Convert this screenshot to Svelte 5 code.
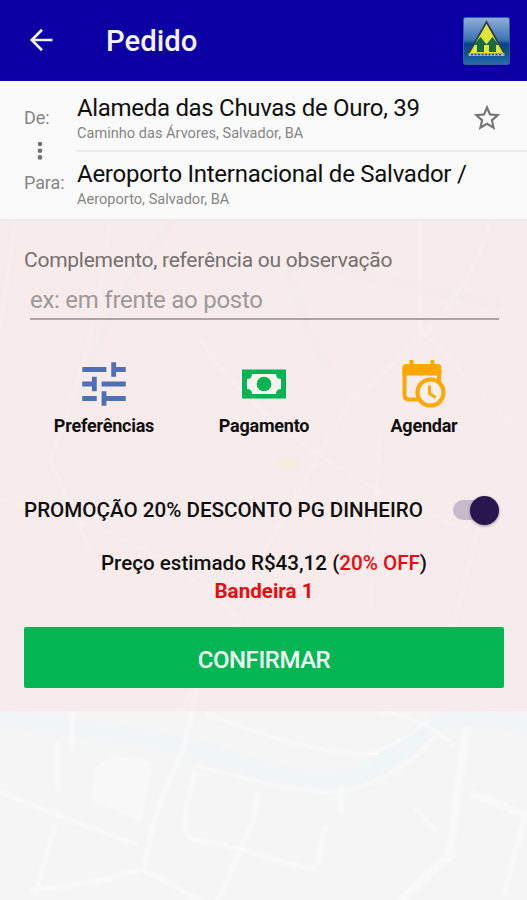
<script>
  let note = $state('');
  let discount = $state(true);
  const route = [
    { title: 'Alameda das Chuvas de Ouro, 39', area: 'Caminho das Árvores, Salvador, BA' },
    { title: 'Aeroporto Internacional de Salvador /', area: 'Aeroporto, Salvador, BA' }
  ];
</script>

<div class="screen">
  <svg class="map" viewBox="0 0 527 680" fill="none" aria-hidden="true">
    <rect width="527" height="680" fill="#f5f5f5" />
    <g stroke="#eff4f7" stroke-width="15" class="soft">
      <path d="M-5 498 Q50 503 100 512 Q180 522 230 540 Q310 569 360 555 Q405 535 424 510 Q450 488 532 506" />
      <path stroke-width="5" stroke="#edf2f4" d="M175 0 Q110 75 80 180M290 50Q300 100 330 150M300 40Q400 65 500 85" />
    </g>
    <path class="soft" fill="#f8f8f8" d="M95 548l20-13 38 7-12 60-50-22z" />
    <g stroke="#f9f9f9" stroke-width="5" class="soft">
      <path d="M196 470Q190 515 176 545Q150 600 144 650L210 685M0 572Q60 597 138 625M58 520v50M55 605L35 675M30 670Q90 665 140 650M72 490v40" />
      <path stroke-width="8" d="M467 507Q457 570 450 635L400 680M470 573L527 596" />
      <path d="M258 572Q255 600 243 625L215 685M195 552q-10 35-10 58 2 12 30 13l100 27M341 565v28M325 606l-8 40M524 600l-20 75M415 588l22 24" />
      <path stroke-width="3" d="M205 493Q300 532 365 534Q395 528 430 500M380 492Q430 498 455 528M195 545Q290 573 340 572Q400 560 435 516" />
      <path stroke-width="5" opacity=".8" d="M15 0L0 110M110 0Q95 130 50 240L90 330M490 0Q470 90 350 180L260 340M200 120Q280 240 470 310M420 0v110L527 220M0 280Q150 310 240 400L180 490M380 210l-10 180M480 300l-40 160" />
    </g>
    <ellipse class="soft" cx="289" cy="244" rx="12" ry="7" fill="#f5f2e4" />
    <path d="M368 534h10" stroke="#fff" stroke-width="1.500" />
  </svg>

  <header>
    <button class="back" aria-label="Voltar">
      <svg width="24" height="24" viewBox="0 0 24 24" fill="none" stroke="#f2f1ff" stroke-width="2.700">
        <path d="M23.500 12H2.500M13 1.800L2.800 12l10.200 10.200" />
      </svg>
    </button>
    <h1>Pedido</h1>
    <svg class="logo" width="47" height="48" viewBox="0 0 47 48">
      <defs>
        <linearGradient id="sky" x1="0" y1="0" x2="0" y2="1">
          <stop offset="0" stop-color="#8fb0d8" />
          <stop offset=".48" stop-color="#3c72b2" />
          <stop offset=".56" stop-color="#07418f" />
          <stop offset=".78" stop-color="#07559c" />
          <stop offset="1" stop-color="#2d6ba8" />
        </linearGradient>
      </defs>
      <rect x=".5" y=".5" width="46" height="47" rx="2" fill="url(#sky)" stroke="#315da5" />
      <path d="M23.500 5L42 37.500H5z" fill="#dfe63a" stroke="#343c47" stroke-width="1.800" />
      <path d="M17.500 20l6.500 8h-3v7h-7v-7h-3zM29.500 20l6.500 8h-3v7h-7v-7h-3z" fill="#17694a" />
      <path d="M5.500 37.500h36" stroke="#a6b1c9" stroke-width="3" />
      <path d="M8 37.500h31" stroke="#3c4968" stroke-width="1.500" stroke-dasharray="2 1.500" />
    </svg>
  </header>

  <section class="route">
    <div class="ends">
      <span>De:</span>
      <svg width="6" height="20" viewBox="0 0 6 20" fill="#707070">
        <circle cx="3" cy="3" r="2.300" /><circle cx="3" cy="9.700" r="2.300" /><circle cx="3" cy="16.400" r="2.300" />
      </svg>
      <span>Para:</span>
    </div>
    <div class="stops">
      {#each route as stop, i}
        <div class="stop">
          <div class="place">
            <strong>{stop.title}</strong>
            <small>{stop.area}</small>
          </div>
          {#if i === 0}
            <svg class="star" width="32" height="32" viewBox="0 0 24 24" fill="#757575">
              <path d="M22 9.240l-7.190-.62L12 2 9.190 8.630 2 9.240l5.460 4.730L5.820 21 12 17.270 18.180 21l-1.630-7.030L22 9.240zM12 15.400l-3.760 2.270 1-4.280-3.320-2.880 4.380-.38L12 6.100l1.710 4.040 4.380.38-3.320 2.880 1 4.280L12 15.400z" />
            </svg>
          {/if}
        </div>
      {/each}
    </div>
  </section>

  <main>
    <label for="note">Complemento, referência ou observação</label>
    <input id="note" bind:value={note} placeholder="ex: em frente ao posto" />

    <div class="actions">
      <button>
        <svg width="58" height="58" viewBox="0 0 24 24" fill="#4e70b6">
          <path d="M3 17v2h6v-2H3zM3 5v2h10V5H3zm10 16v-2h8v-2h-8v-2h-2v6h2zM7 9v2H3v2h4v2h2V9H7zm14 4v-2H11v2h10zm-6-4h2V7h4V5h-4V3h-2v6z" />
        </svg>
        <span>Preferências</span>
      </button>
      <button>
        <svg width="58" height="58" viewBox="0 0 58 58">
          <path d="M7 14.500h44v29H7z" fill="#03b455" />
          <path d="M17 19h24q0 5 5 5v10q-5 0-5 5H17q0-5-5-5V24q5 0 5-5z" fill="#f6f4ed" />
          <circle cx="29" cy="29" r="7.300" fill="#03b455" />
        </svg>
        <span>Pagamento</span>
      </button>
      <button>
        <svg width="58" height="58" viewBox="0 0 58 58" fill="none" stroke="#fda800">
          <path d="M9.500 12v28q0 4.500 4.500 4.500H27M44 10v18" stroke-width="4" />
          <path d="M7.500 20.500V13q0-4 4-4h3V5h4v4h17V5h4v4h3q4 0 4 4v7.500z" fill="#fda800" stroke="none" />
          <circle cx="35.500" cy="37.500" r="13" fill="#f8eeeb" stroke-width="4.200" />
          <path d="M34.500 30.500v8l6 4" stroke-width="3" />
        </svg>
        <span>Agendar</span>
      </button>
    </div>

    <div class="promo">
      <span>PROMOÇÃO 20% DESCONTO PG DINHEIRO</span>
      <button class="switch" class:off={!discount} role="switch" aria-checked={discount} aria-label="Desconto" onclick={() => (discount = !discount)}><i></i></button>
    </div>

    <div class="price">
      <p>Preço estimado R$43,12 (<em>20% OFF</em>)</p>
      <p><em class="flag">Bandeira 1</em></p>
    </div>
    <button class="confirm"><span>CONFIRMAR</span></button>
  </main>
</div>

<style>
  .screen {
    position: relative;
    width: 527px;
    height: 900px;
    overflow: hidden;
    background: #f5f5f5;
    font-family: Roboto, 'Liberation Sans', sans-serif;
    color: #101010;
  }
  .map { position: absolute; left: 0; top: 220px; width: 527px; height: 680px; }
  .soft { filter: blur(1.5px); }
  button { border: 0; padding: 0; background: none; font: inherit; color: inherit; }
  header {
    position: relative;
    box-sizing: border-box;
    height: 81px;
    padding: 0 17px 0 29px;
    display: flex;
    align-items: center;
    background: #0c00a5;
  }
  .back { width: 24px; height: 24px; margin-top: -1px; display: flex; }
  h1 { margin: 1px 0 0 53px; flex: 1; font-size: 29.300px; font-weight: 500; line-height: 40px; color: #f4f3ff; }
  .route {
    position: relative;
    box-sizing: border-box;
    height: 140px;
    display: flex;
    background: #fafafa;
    border-bottom: 2px solid #ecebea;
  }
  .ends {
    width: 76px;
    box-sizing: border-box;
    padding: 26px 0 0 24px;
    display: flex;
    flex-direction: column;
    font-size: 18px;
    letter-spacing: -.1px;
    line-height: 22px;
    color: #858585;
  }
  .ends svg { margin: 12px 0 11px 13px; }
  .stops { flex: 1; }
  .stop { height: 69px; box-sizing: border-box; display: flex; padding: 13px 24px 0 1px; justify-content: space-between; white-space: nowrap; }
  .stop + .stop { height: 68px; border-top: 2px solid #ebebeb; padding-top: 8px; }
  .place { display: flex; flex-direction: column; }
  strong { font-size: 24px; font-weight: 400; letter-spacing: -.31px; line-height: 28px; }
  .stop + .stop strong { letter-spacing: -.26px; }
  small { font-size: 14.500px; line-height: 24px; letter-spacing: .04px; color: #858585; }
  .star { margin-top: 8px; }
  main {
    position: relative;
    box-sizing: border-box;
    height: 490px;
    padding: 25px 23px 0 24px;
    display: flex;
    flex-direction: column;
    background: rgba(251, 223, 221, .4);
  }
  label { font-size: 21px; letter-spacing: -.25px; line-height: 28px; color: #756f6f; white-space: nowrap; }
  input {
    margin: 10px 5px 0 6px;
    height: 36px;
    box-sizing: border-box;
    padding: 0 0 2px;
    border: 0;
    border-bottom: 2px solid #aaa4a4;
    outline: 0;
    background: none;
    font: 24px Roboto, sans-serif;
    letter-spacing: -.26px;
    color: #333;
  }
  input::placeholder { color: #9e9998; opacity: 1; }
  .actions { display: flex; height: 90px; margin-top: 35px; }
  .actions button { width: 160px; display: flex; flex-direction: column; align-items: center; }
  .actions span { margin-top: 3px; font-size: 18px; letter-spacing: -.22px; font-weight: 700; line-height: 20px; }
  .promo { height: 32px; margin-top: 49px; display: flex; justify-content: space-between; align-items: center; font-size: 20.600px; font-weight: 500; white-space: nowrap; }
  .switch { width: 46px; height: 20px; margin-right: 5px; border-radius: 10px; background: #c8bacb; display: flex; align-items: center; justify-content: flex-end; }
  .switch i { width: 29px; height: 29px; border-radius: 50%; background: #291650; box-shadow: 0 1px 3px #0006; flex: none; }
  .switch.off { justify-content: flex-start; }
  .price { margin-top: 23px; text-align: center; font-size: 20.600px; font-weight: 500; line-height: 28px; }
  .price p { margin: 0; }
  em { font-style: normal; color: #e90b10; }
  .flag { font-weight: 700; }
  .confirm { height: 61px; margin-top: 22px; border-radius: 2px; background: #03b553; box-shadow: 0 0 2px #d8fbe4; font-size: 24px; letter-spacing: -.45px; font-weight: 500; color: #effff4; line-height: 66px; }
</style>
